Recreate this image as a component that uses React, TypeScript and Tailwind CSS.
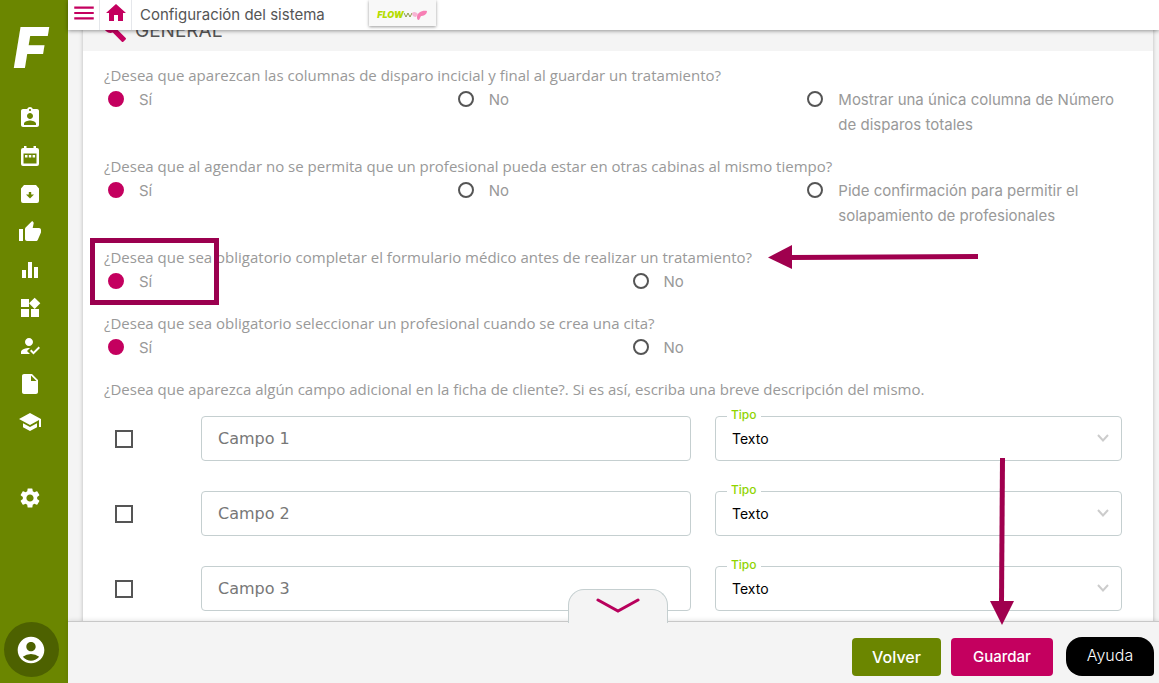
import { useState } from "react";
import {
  MdAccountCircle,
  MdAssignmentInd,
  MdBuild,
  MdEqualizer,
  MdHome,
  MdHowToReg,
  MdInsertDriveFile,
  MdMenu,
  MdSchool,
  MdSettings,
  MdThumbUp,
  MdWidgets,
} from "react-icons/md";

function CalendarIcon({ size }: { size: number }) {
  return (
    <svg width={size} height={size} viewBox="0 0 24 24" fill="currentColor" aria-hidden="true">
      <path
        fillRule="evenodd"
        d="M6 2h2.500v2h7V2H18v2h1a2 2 0 0 1 2 2v14a2 2 0 0 1-2 2H5a2 2 0 0 1-2-2V6a2 2 0 0 1 2-2h1zM5.500 9.500v10h13v-10z"
      />
      <path d="M7 11h2.500v2.500H7zM10.800 11h2.500v2.500h-2.500zM14.600 11h2.500v2.500h-2.500z" />
    </svg>
  );
}

function StockIcon({ size }: { size: number }) {
  return (
    <svg width={size} height={size} viewBox="0 0 24 24" fill="currentColor" aria-hidden="true">
      <path
        fillRule="evenodd"
        d="M6 3h12l3 3.500V19a2 2 0 0 1-2 2H5a2 2 0 0 1-2-2V6.500zM10.800 10v2.500H8l4 4 4-4h-2.800V10z"
      />
    </svg>
  );
}

const navItems = [
  { label: "Clientes", Icon: MdAssignmentInd },
  { label: "Agenda", Icon: CalendarIcon },
  { label: "Almacén", Icon: StockIcon },
  { label: "Marketing", Icon: MdThumbUp },
  { label: "Estadísticas", Icon: MdEqualizer },
  { label: "Aplicaciones", Icon: MdWidgets },
  { label: "Personal", Icon: MdHowToReg },
  { label: "Documentos", Icon: MdInsertDriveFile },
  { label: "Formación", Icon: MdSchool },
];

const questions = [
  {
    id: "disparos",
    text: "¿Desea que aparezcan las columnas de disparo incicial y final al guardar un tratamiento?",
    options: ["Sí", "No", "Mostrar una única columna de Número de disparos totales"],
  },
  {
    id: "cabinas",
    text: "¿Desea que al agendar no se permita que un profesional pueda estar en otras cabinas al mismo tiempo?",
    options: ["Sí", "No", "Pide confirmación para permitir el solapamiento de profesionales"],
  },
  {
    id: "formulario",
    text: "¿Desea que sea obligatorio completar el formulario médico antes de realizar un tratamiento?",
    options: ["Sí", "No"],
    highlighted: true,
  },
  {
    id: "profesional",
    text: "¿Desea que sea obligatorio seleccionar un profesional cuando se crea una cita?",
    options: ["Sí", "No"],
  },
];

function Sidebar() {
  return (
    <aside className="flex w-[68px] shrink-0 flex-col items-center bg-[#6b8600] pr-2 text-white">
      <div className="mt-5 h-[56px] text-[56px] leading-[56px] font-black italic">F</div>
      <nav className="mt-[30px] flex flex-col gap-[14px]">
        {navItems.map(({ label, Icon }) => (
          <a key={label} href="#" aria-label={label} className="block">
            <Icon size={24} />
          </a>
        ))}
      </nav>
      <a href="#" aria-label="Configuración" className="mt-[52px] block">
        <MdSettings size={24} />
      </a>
      <button
        type="button"
        aria-label="Cuenta"
        className="mt-auto mb-[6px] ml-[2px] flex size-[55px] items-center justify-center rounded-full bg-[#4d6100]"
      >
        <MdAccountCircle size={32} />
      </button>
    </aside>
  );
}

function TopBar() {
  return (
    <header className="relative z-10 flex h-[30px] shrink-0 items-center bg-white shadow-[0_1px_4px_rgba(0,0,0,0.4)]">
      <button
        type="button"
        aria-label="Menú"
        className="flex h-full w-8 items-center justify-center border-r border-gray-200 pb-1 text-[#c4005f]"
      >
        <MdMenu size={26} />
      </button>
      <a
        href="#"
        aria-label="Inicio"
        className="flex h-full w-8 items-center justify-center border-r border-gray-200 pb-1 text-[#c4005f]"
      >
        <MdHome size={24} />
      </a>
      <span className="ml-2 w-[229px] text-[15px] text-[#555]">Configuración del sistema</span>
      <button
        type="button"
        className="flex h-[26px] w-[67px] items-center justify-center self-start bg-[#f8f8f8] pt-1 shadow-[0_1px_3px_rgba(0,0,0,0.4)]"
      >
        <span className="text-[9px] font-black text-[#b5dc00] italic">FLOW</span>
        <svg width="24" height="14" viewBox="0 0 24 14" aria-hidden="true">
          <path d="M0 5l2 4 2-4 2 4 2-4" stroke="#8a9a4a" strokeWidth="1" fill="none" />
          <path d="M8 5c2-2 4-1 6 1l-2 3c-2 0-4-1-4-4z" fill="#f7b5d3" />
          <path d="M13 9c0-4 5-7 10-6 0 4-4 5-6 5l-2 4c-2 0-2-2-2-3z" fill="#f77fb4" />
        </svg>
      </button>
    </header>
  );
}

function Question({ id, text, options, highlighted }: (typeof questions)[number]) {
  const [value, setValue] = useState(options[0]);

  return (
    <div className="relative mb-[17px]">
      <fieldset className="min-w-0">
        <legend className="block h-6 font-['Open_Sans',sans-serif] leading-6 whitespace-nowrap">{text}</legend>
        <div className={options.length === 3 ? "grid grid-cols-3" : "grid grid-cols-2"}>
          {options.map((option) => (
            <label key={option} className="flex gap-[15px] pr-6 pl-1 leading-[25px]">
              <input
                type="radio"
                name={id}
                checked={value === option}
                onChange={() => setValue(option)}
                className="mt-1 size-4 shrink-0 appearance-none rounded-full border-2 border-[#555] checked:border-[#c4005f] checked:bg-[#c4005f]"
              />
              {option}
            </label>
          ))}
        </div>
      </fieldset>
      {highlighted && (
        <>
          <div className="pointer-events-none absolute -top-[7px] -left-[14px] h-[67px] w-[129px] border-5 border-[#9b004f]" />
          <svg
            className="pointer-events-none absolute top-0 left-[664px]"
            width="210"
            height="24"
            viewBox="0 0 210 24"
            fill="#a0004e"
            aria-hidden="true"
          >
            <path d="M0 12.500L24 0V24Z" />
            <path d="M23 10L210 9V14L23 15Z" />
          </svg>
        </>
      )}
    </div>
  );
}

function FieldRow({ index }: { index: number }) {
  return (
    <div className="flex items-center">
      <div className="w-[97px] shrink-0 pl-[11px]">
        <input
          type="checkbox"
          aria-label={`Activar campo ${index}`}
          className="block size-[18px] appearance-none border-2 border-[#555] checked:bg-[#c4005f]"
        />
      </div>
      <div className="h-[45px] min-w-0 flex-[490]">
        <input
          type="text"
          placeholder={`Campo ${index}`}
          aria-label={`Campo ${index}`}
          className="h-full w-full rounded border border-[#c5cfd0] px-4 font-['DejaVu_Sans',sans-serif] text-base placeholder:text-[#777]"
        />
      </div>
      <div className="relative ml-6 h-[45px] min-w-0 flex-[407]">
        <label
          htmlFor={`tipo-${index}`}
          className="absolute -top-2 left-3 bg-white px-1 text-[12px] leading-[14px] font-medium text-[#8fd400]"
        >
          Tipo
        </label>
        <select
          id={`tipo-${index}`}
          className="h-full w-full appearance-none rounded border border-[#c5cfd0] px-4 text-sm text-black"
        >
          <option>Texto</option>
          <option>Número</option>
          <option>Fecha</option>
        </select>
        <svg
          className="pointer-events-none absolute top-[18px] right-3"
          width="14"
          height="8"
          viewBox="0 0 14 8"
          fill="none"
          stroke="#ccc"
          strokeWidth="2"
          aria-hidden="true"
        >
          <path d="M2 1L7 6.500L12 1" />
        </svg>
      </div>
    </div>
  );
}

function BottomBar() {
  return (
    <footer className="relative z-10 flex h-[62px] shrink-0 items-end justify-end border-t border-[#c8c8c8] bg-[#f4f4f4] pr-[5px] pb-[7px] text-base text-white shadow-[0_-1px_4px_rgba(0,0,0,0.1)]">
      <button
        type="button"
        aria-label="Desplegar"
        className="absolute bottom-full left-[500px] -mb-px flex h-[34px] w-[100px] justify-center rounded-t-2xl border border-b-0 border-[#c5cfd0] bg-[#f4f4f4] pt-2"
      >
        <svg width="44" height="15" viewBox="0 0 44 15" fill="none" stroke="#b8005c" strokeWidth="3" aria-hidden="true">
          <path d="M2 2L22 13L42 2" strokeLinecap="round" />
        </svg>
      </button>
      <button type="button" className="h-[38px] w-[89px] rounded bg-[#6b8600] font-medium">
        Volver
      </button>
      <div className="relative ml-[10px]">
        <svg
          className="pointer-events-none absolute bottom-full left-[39px] mb-[13px]"
          width="24"
          height="167"
          viewBox="0 0 24 167"
          fill="#a0004e"
          aria-hidden="true"
        >
          <path d="M10 0H15L14 144H9Z" />
          <path d="M0 143H24L12 167Z" />
        </svg>
        <button type="button" className="h-[38px] w-[102px] rounded bg-[#c4005f] text-[15px] font-medium">
          Guardar
        </button>
      </div>
      <button
        type="button"
        className="ml-[13px] h-[39px] w-[88px] rounded-2xl rounded-br bg-black pb-1 font-light"
      >
        Ayuda
      </button>
    </footer>
  );
}

export default function App() {
  return (
    <div className="flex h-screen overflow-hidden bg-[#f4f4f4] font-['Inter',sans-serif]">
      <Sidebar />
      <div className="flex min-w-0 flex-1 flex-col">
        <TopBar />
        <main className="min-h-0 flex-1 overflow-hidden pr-[6px] pl-[15px]">
          <section className="-mt-[19px] min-h-full bg-white pb-6 shadow-[0_0_4px_rgba(0,0,0,0.25)]">
            <div className="flex h-10 items-center gap-2 bg-[#f4f4f4] pl-5">
              <MdBuild size={24} className="text-[#c4005f]" />
              <h1 className="text-[19px] text-[#555]">GENERAL</h1>
            </div>
            <form className="pt-3 pl-[21px] text-[15px] text-[#999]">
              {questions.map((question) => (
                <Question key={question.id} {...question} />
              ))}
              <p className="font-['Open_Sans',sans-serif] leading-6">
                ¿Desea que aparezca algún campo adicional en la ficha de cliente?. Si es así, escriba una breve
                descripción del mismo.
              </p>
              <div className="mt-[15px] flex flex-col gap-[30px] pr-[31px]">
                {[1, 2, 3].map((index) => (
                  <FieldRow key={index} index={index} />
                ))}
              </div>
            </form>
          </section>
        </main>
        <BottomBar />
      </div>
    </div>
  );
}
